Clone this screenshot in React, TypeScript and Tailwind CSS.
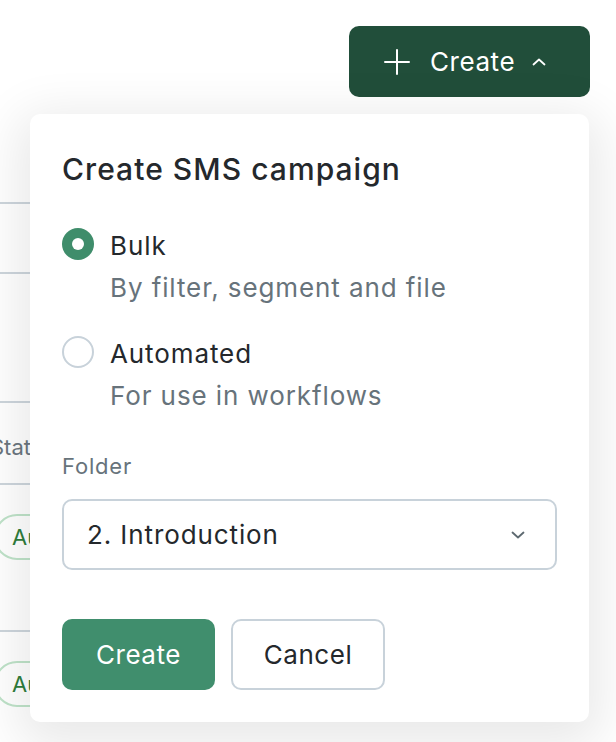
import { useState } from 'react';

function PlusIcon() {
  return (
    <svg width="26" height="26" viewBox="0 0 26 26" fill="none" stroke="currentColor" strokeWidth="2" strokeLinecap="round">
      <path d="M13 1v24M1 13h24" />
    </svg>
  );
}

function Chevron({ up, className }: { up?: boolean; className?: string }) {
  return (
    <svg width="14" height="8" viewBox="0 0 14 8" fill="none" stroke="currentColor" strokeWidth="1.8" strokeLinecap="round" strokeLinejoin="round" className={className}>
      <path d={up ? 'M1.5 6.5L7 1.5l5.5 5' : 'M1.5 1.5L7 6.5l5.5-5'} />
    </svg>
  );
}

function Radio({ checked }: { checked: boolean }) {
  if (checked) {
    return (
      <span className="mt-[3px] flex h-[32px] w-[32px] shrink-0 items-center justify-center rounded-full bg-[#3f8d6b]">
        <span className="h-[12px] w-[12px] rounded-full bg-white" />
      </span>
    );
  }
  return <span className="mt-[3px] h-[32px] w-[32px] shrink-0 rounded-full border-2 border-[#c8d2da] bg-white" />;
}

const options = [
  { id: 'bulk', label: 'Bulk', description: 'By filter, segment and file' },
  { id: 'automated', label: 'Automated', description: 'For use in workflows' },
];

export default function App() {
  const [type, setType] = useState('bulk');

  return (
    <div className="relative h-[742px] w-[616px] overflow-hidden bg-white font-['Inter',sans-serif] text-[#24282c]">
      {/* page header */}
      <div className="flex justify-end pr-[26px] pt-[26px]">
        <button className="flex h-[71px] w-[241px] items-center rounded-[10px] bg-[#214e3a] pl-[35px] text-[26px] tracking-[0.56px] text-white">
          <PlusIcon />
          <span className="ml-[20px]">Create</span>
          <Chevron up className="ml-[17px]" />
        </button>
      </div>

      {/* table behind the popover */}
      <div className="mt-[105px] w-[480px] text-[22px]">
        <div className="h-[70px] border-t-2 border-[#cdd5dc]" />
        <div className="h-[129px] border-t-2 border-[#cdd5dc]" />
        <div className="flex h-[82px] items-center border-t-2 border-[#cdd5dc] pt-[8px] text-[22px] text-[#6b767e]">
          <span className="-ml-[10px]">Status</span>
        </div>
        <div className="h-[147px] border-t-2 border-[#cdd5dc] pt-[29px]">
          <span className="-ml-[6px] inline-flex h-[46px] items-center rounded-full border-2 border-[#bfe3c9] px-[16px] text-[#2e7d3c]">Auto</span>
        </div>
        <div className="h-[147px] border-t-2 border-[#cdd5dc] pt-[29px]">
          <span className="-ml-[6px] inline-flex h-[46px] items-center rounded-full border-2 border-[#bfe3c9] px-[16px] text-[#2e7d3c]">Auto</span>
        </div>
      </div>

      {/* popover */}
      <div className="absolute left-[30px] top-[114px] w-[559px] rounded-[10px] bg-white px-[32px] pb-[32px] pt-[37px] shadow-[0_12px_50px_12px_rgba(0,0,0,0.09)]">
        <h2 className="text-[30px] font-medium leading-[36px] tracking-[1.05px]">Create SMS campaign</h2>

        <div className="mt-[38px] flex flex-col gap-[24px]">
          {options.map((o) => (
            <label key={o.id} className="flex cursor-pointer gap-[16px]" onClick={() => setType(o.id)}>
              <Radio checked={type === o.id} />
              <div className="text-[26px] leading-[42px] tracking-[0.9px]">
                <div>{o.label}</div>
                <div className="text-[#67737b]">{o.description}</div>
              </div>
            </label>
          ))}
        </div>

        <div className="mt-[35px] text-[22px] leading-[28px] tracking-[0.8px] text-[#67737b]">Folder</div>
        <div className="mt-[19px] flex h-[71px] items-center justify-between rounded-[10px] border-2 border-[#c8d2da] pl-[23px] pr-[30px] text-[26px] tracking-[0.9px]">
          <span>2. Introduction</span>
          <Chevron className="text-[#5d6970]" />
        </div>

        <div className="mt-[49px] flex gap-[16px] text-[26px] tracking-[0.56px]">
          <button className="h-[71px] w-[153px] rounded-[10px] bg-[#408e6d] text-white">Create</button>
          <button className="h-[71px] w-[154px] rounded-[10px] border-2 border-[#c8d2da] bg-white">Cancel</button>
        </div>
      </div>
    </div>
  );
}
